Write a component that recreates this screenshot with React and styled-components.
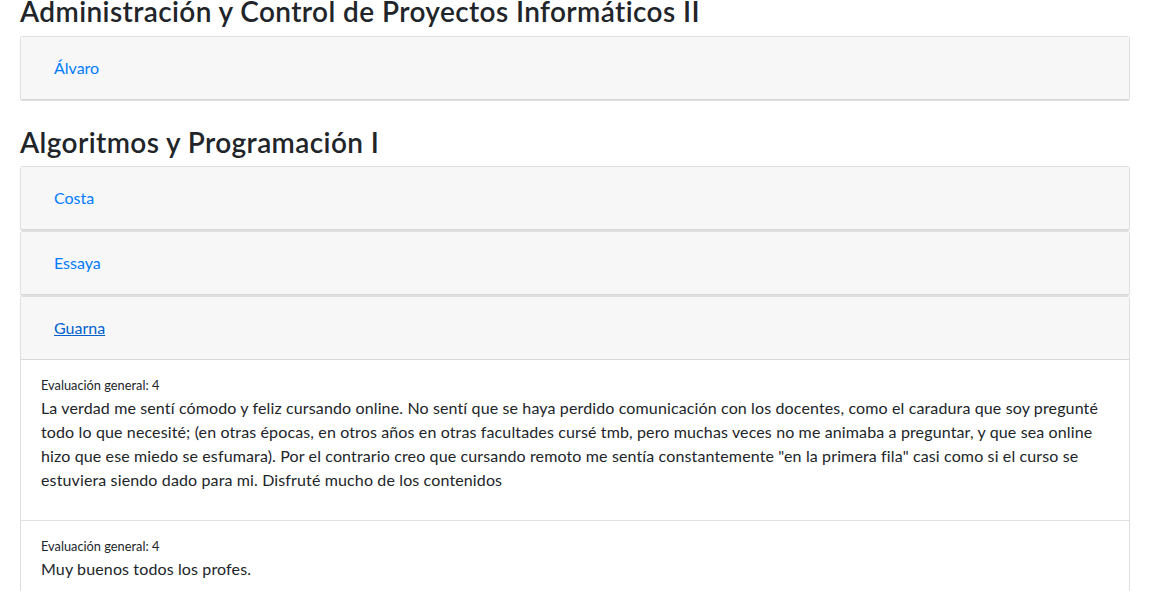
import React from 'react';
import styled, {createGlobalStyle, css} from 'styled-components';

const GlobalStyle = createGlobalStyle`
  * {
    box-sizing: border-box;
  }

  body {
    margin: 0;
    background: #ffffff;
    color: #212529;
    font-family: Lato, "Noto Sans", "Liberation Sans", sans-serif;
    font-size: 16px;
    line-height: 1.5;
  }
`

const Container = styled.div`
  width: 1110px;
  margin-left: 20px;
`

const SubjectTitle = styled.h3`
  font-size: 28px;
  font-weight: 600;
  line-height: 1.2;
  letter-spacing: 0.4px;
  margin: ${props => props.first ? '-5px 0 7px 0' : '25px 0 7px 0'};
`

const Accordion = styled.div`
  display: flex;
  flex-direction: column;
`

const Card = styled.div`
  background: #ffffff;
  border: 1px solid rgba(0, 0, 0, 0.125);
  border-radius: 3px;
`

const CardHeader = styled.div`
  background: #f7f7f7;
  padding: 12px 20px;
  border-bottom: 1px solid rgba(0, 0, 0, 0.125);
`

const ToggleButton = styled.button`
  font-family: inherit;
  font-size: 16px;
  line-height: 1.5;
  padding: 6px 12px;
  border: 1px solid transparent;
  background: transparent;
  color: #007bff;
  cursor: pointer;

  ${props => props.open && css`
    text-decoration: underline;
    color: #0062cc;
  `}
`

const ReviewList = styled.div`
  display: flex;
  flex-direction: column;
`

const Review = styled.div`
  padding: 12px 20px;
  border-bottom: 1px solid rgba(0, 0, 0, 0.125);

  &:last-child {
    border-bottom: none;
  }
`

const Score = styled.div`
  small {
    font-size: 80%;
  }
`

const Comment = styled.p`
  margin: 0 0 16px 0;
  letter-spacing: 0.13px;
`

const subjects = [
    {
        name: 'Administración y Control de Proyectos Informáticos II',
        teachers: [{name: 'Álvaro'}]
    },
    {
        name: 'Algoritmos y Programación I',
        teachers: [
            {name: 'Costa'},
            {name: 'Essaya'},
            {
                name: 'Guarna',
                open: true,
                reviews: [
                    {
                        score: 4,
                        text: 'La verdad me sentí cómodo y feliz cursando online. No sentí que se haya perdido comunicación con los docentes, como el caradura que soy pregunté todo lo que necesité; (en otras épocas, en otros años en otras facultades cursé tmb, pero muchas veces no me animaba a preguntar, y que sea online hizo que ese miedo se esfumara). Por el contrario creo que cursando remoto me sentía constantemente "en la primera fila" casi como si el curso se estuviera siendo dado para mi. Disfruté mucho de los contenidos'
                    },
                    {score: 4, text: 'Muy buenos todos los profes.'},
                    {score: 4, text: 'Excelente curso.'}
                ]
            }
        ]
    }
]

const App = () => {
    return (
        <>
            <GlobalStyle/>
            <Container>
                {subjects.map((subject, i) => (
                    <div key={subject.name}>
                        <SubjectTitle first={i === 0}>{subject.name}</SubjectTitle>
                        <Accordion>
                            {subject.teachers.map(teacher => (
                                <Card key={teacher.name}>
                                    <CardHeader>
                                        <ToggleButton open={teacher.open}>{teacher.name}</ToggleButton>
                                    </CardHeader>
                                    {teacher.open &&
                                        <ReviewList>
                                            {teacher.reviews.map((review, j) => (
                                                <Review key={j}>
                                                    <Score><small>Evaluación general: {review.score}</small></Score>
                                                    <Comment>{review.text}</Comment>
                                                </Review>
                                            ))}
                                        </ReviewList>
                                    }
                                </Card>
                            ))}
                        </Accordion>
                    </div>
                ))}
            </Container>
        </>
    );
};

export default App;
